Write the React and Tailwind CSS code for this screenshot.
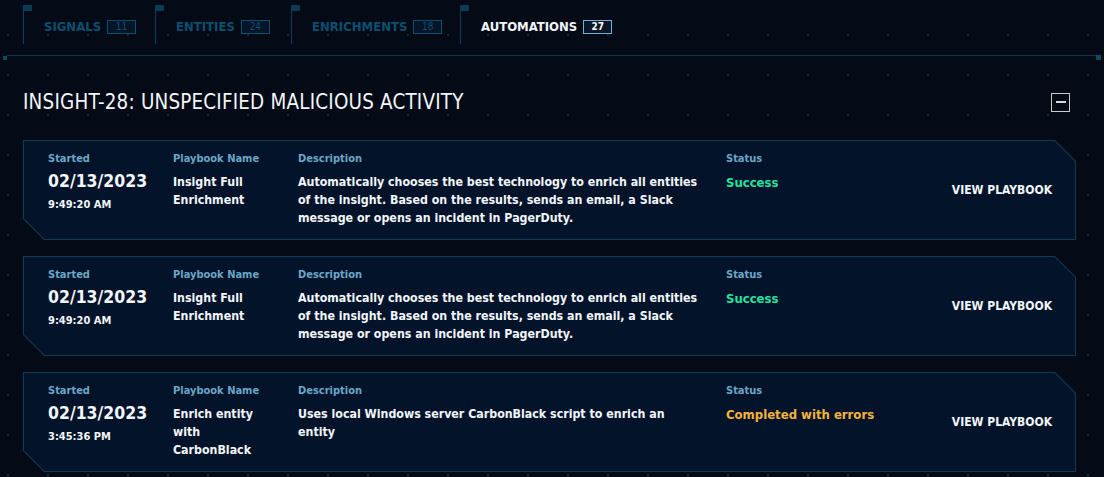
const FONT = "font-['DejaVu_Sans_Condensed','Liberation_Sans',sans-serif]";

const tabs = [
  { label: 'SIGNALS', count: 11, width: 'w-[132px]' },
  { label: 'ENTITIES', count: 24, width: 'w-[136px]' },
  { label: 'ENRICHMENTS', count: 18, width: 'w-[169px]' },
  { label: 'AUTOMATIONS', count: 27, width: 'w-[160px]', active: true },
];

const runs = [
  {
    date: '02/13/2023',
    time: '9:49:20 AM',
    name: 'Insight Full Enrichment',
    description:
      'Automatically chooses the best technology to enrich all entities of the insight. Based on the results, sends an email, a Slack message or opens an incident in PagerDuty.',
    status: 'Success',
    ok: true,
  },
  {
    date: '02/13/2023',
    time: '9:49:20 AM',
    name: 'Insight Full Enrichment',
    description:
      'Automatically chooses the best technology to enrich all entities of the insight. Based on the results, sends an email, a Slack message or opens an incident in PagerDuty.',
    status: 'Success',
    ok: true,
  },
  {
    date: '02/13/2023',
    time: '3:45:36 PM',
    name: 'Enrich entity with CarbonBlack',
    description: 'Uses local Windows server CarbonBlack script to enrich an entity',
    status: 'Completed with errors',
    ok: false,
  },
];

const Tab = ({ tab }) => (
  <div className={`relative flex h-[39px] items-center border-l border-[#0b3d52] pl-[20px] pt-[4px] ${tab.width}`}>
    {/* little flag on top of the divider */}
    <span className="absolute -left-px top-0 h-[6px] w-[9px] bg-[#0b3d52]" />
    <span className={`text-[13px] font-bold ${tab.active ? 'text-[#f3f6fa]' : 'text-[#0a5070]'}`}>
      {tab.label}
    </span>
    <span
      className={`ml-[6px] flex h-[14px] w-[29px] items-center justify-center border text-[10px] leading-none ${
        tab.active ? 'border-[#6cb3cf] bg-[#0a1627] font-bold text-white' : 'border-[#0a5070] bg-[#061427] text-[#0a5070]'
      }`}
    >
      {tab.count}
    </span>
  </div>
);

const Label = ({ children }) => (
  <div className="text-[11px] font-bold leading-[16px] text-[#6ba6c6]">{children}</div>
);

const RunCard = ({ run }) => (
  <div className="h-[100px] bg-[#0f3a50] p-px [clip-path:polygon(0_0,calc(100%_-_21px)_0,100%_21px,100%_100%,21px_100%,0_calc(100%_-_21px))]">
    <div className="flex h-full bg-[#03142a] pl-[24px] pr-[23px] [clip-path:polygon(0_0,calc(100%_-_20.5px)_0,100%_20.5px,100%_100%,20.5px_100%,0_calc(100%_-_20.5px))]">
      <div className="w-[125px] pt-[10px]">
        <Label>Started</Label>
        <div className="mt-[3px] text-[17.5px] font-bold leading-[22px] text-[#f3f6fa]">{run.date}</div>
        <div className="mt-[6px] text-[11px] font-bold leading-[14px] text-[#f3f6fa]">{run.time}</div>
      </div>
      <div className="w-[125px] pr-[20px] pt-[10px]">
        <Label>Playbook Name</Label>
        <div className="mt-[6px] text-[12.3px] font-bold leading-[18px] text-[#f3f6fa]">{run.name}</div>
      </div>
      <div className="w-[428px] pr-[26px] pt-[10px]">
        <Label>Description</Label>
        <div className="mt-[6px] text-[12.3px] font-bold leading-[18px] text-[#f3f6fa]">{run.description}</div>
      </div>
      <div className="flex-1 pt-[10px]">
        <Label>Status</Label>
        <div className={`mt-[7px] text-[13px] font-bold leading-[18px] ${run.ok ? 'text-[#25e1a1]' : 'text-[#f6b23d]'}`}>
          {run.status}
        </div>
      </div>
      <button className="self-center text-[12px] font-bold text-[#f3f6fa]">VIEW PLAYBOOK</button>
    </div>
  </div>
);

export default function App() {
  return (
    <div
      className={`min-h-screen bg-[#040b17] ${FONT} [background-image:radial-gradient(circle,#18252f_1px,transparent_1.2px)] [background-size:40px_40px] [background-position:-12px_15px]`}
    >
      {/* Tabs */}
      <div className="flex px-[23px] pt-[5px]">
        {tabs.map((t) => (
          <Tab key={t.label} tab={t} />
        ))}
      </div>

      {/* Divider */}
      <div className="mx-[3px] mt-[11px] flex items-start">
        <span className="mt-px h-[4px] w-[4px] bg-[#0f4a60]" />
        <span className="h-px flex-1 bg-[#0c3545]" />
        <span className="h-[5px] w-[5px] bg-[#0f4a60]" />
      </div>

      <div className="pl-[23px] pr-[28px]">
        <div className="mt-[22px] flex h-[40px] items-center justify-between">
          <h1 className="text-[20.4px] font-normal tracking-[0.2px] text-[#f3f6fa]">
            INSIGHT-28: UNSPECIFIED MALICIOUS ACTIVITY
          </h1>
          <button className="mr-[6px] flex h-[19px] w-[19px] items-center justify-center border border-[#c9cccf]">
            <span className="h-[2px] w-[10px] bg-[#d5d7da]" />
          </button>
        </div>

        <div className="mt-[18px] flex flex-col gap-4">
          {runs.map((r, i) => (
            <RunCard key={i} run={r} />
          ))}
        </div>
      </div>
    </div>
  );
}
